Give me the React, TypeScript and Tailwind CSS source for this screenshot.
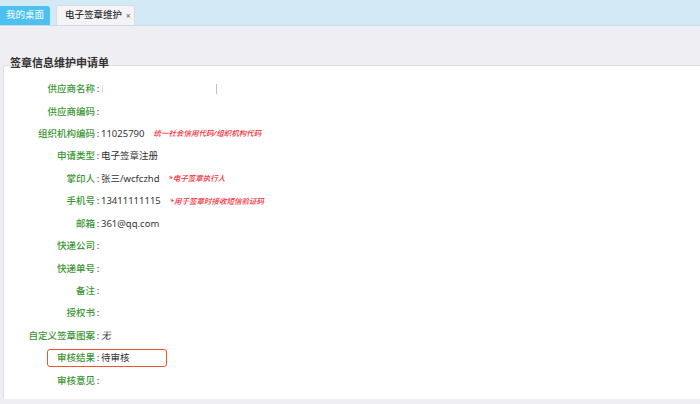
import React from 'react';

interface Row {
  label: string;
  value?: string;
  note?: string;
  italic?: boolean;
}

const rows: Row[] = [
  { label: '供应商名称' },
  { label: '供应商编码' },
  { label: '组织机构编码', value: '11025790', note: '统一社会信用代码/组织机构代码' },
  { label: '申请类型', value: '电子签章注册' },
  { label: '掌印人', value: '张三/wcfczhd', note: '*电子签章执行人' },
  { label: '手机号', value: '13411111115', note: '*用于签章时接收短信验证码' },
  { label: '邮箱', value: '361@qq.com' },
  { label: '快递公司' },
  { label: '快递单号' },
  { label: '备注' },
  { label: '授权书' },
  { label: '自定义签章图案', value: '无', italic: true },
  { label: '审核结果', value: '待审核' },
  { label: '审核意见' },
];

function App() {
  return (
    <div
      className="w-[700px] h-[404px] overflow-hidden bg-[#efeef3] flex flex-col"
      style={{ fontFamily: '"Noto Sans", "Noto Sans CJK SC", sans-serif' }}
    >
      {/* Tabs */}
      <div className="h-[26px] shrink-0 bg-[#d3e9f6] border-b border-[#c9dbe6] flex items-end">
        <div className="h-[19px] w-[50px] bg-[#4cc1ef] text-white text-[9.5px] flex items-center justify-center rounded-tr-[3px]">
          我的桌面
        </div>
        <div className="ml-[6px] h-[20px] w-[79px] bg-[#f4f4f7] border border-b-0 border-[#d5dde3] rounded-t-[3px] flex items-center pl-[8px] gap-[4px] text-[9.5px] text-[#333]">
          <span className="font-medium">电子签章维护</span>
          <span className="text-[8px] text-[#777] font-bold">×</span>
        </div>
      </div>

      {/* Body */}
      <div className="flex-1 flex flex-col pl-[3px] pb-[5px]">
        <div className="h-[39px] shrink-0 relative">
          <div className="absolute left-[7px] top-[31px] z-10 text-[11px] font-bold text-[#333] leading-none">
            签章信息维护申请单
          </div>
        </div>
        <div className="flex-1 bg-white border-t border-l border-[#dedde2] rounded-tl-[3px] pt-[12px]">
          {rows.map((r, i) => (
            <div key={i} className="h-[22.45px] flex items-center text-[9.5px] relative">
              <div className="w-[91px] text-right text-[#3b9534] font-medium">{r.label}</div>
              <div className="w-[6px] text-center text-[#555] font-medium">:</div>
              <div className={`text-[#333] ${r.italic ? 'italic' : ''}`}>
                {r.value}
              </div>
              {i === 0 && (
                <>
                  <span className="ml-[1px] w-[1px] h-[8px] bg-[#f1d7d7]" />
                  <span className="ml-[113px] w-[1px] h-[10px] bg-[#b7c3d3]" />
                </>
              )}
              {r.note && (
                <span className="ml-[9px] text-[7.5px] italic font-medium text-[#f52a35]">{r.note}</span>
              )}
              {r.label === '审核结果' && (
                <div className="absolute left-[43px] top-[2px] w-[120px] h-[18px] border-[1.5px] border-[#ee5529] rounded-[3px]" />
              )}
            </div>
          ))}
        </div>
      </div>
    </div>
  );
}

export default App;
